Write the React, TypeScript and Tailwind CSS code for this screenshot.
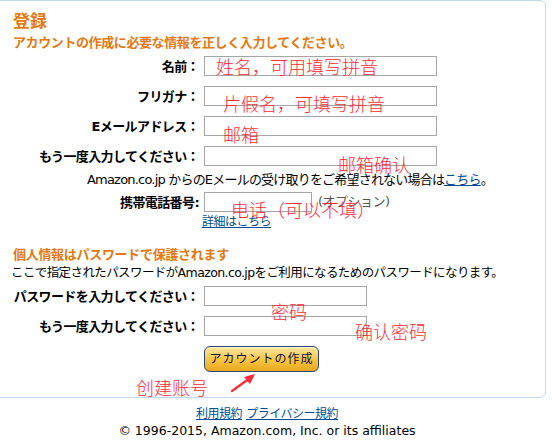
import React from "react";

const jp = { fontFamily: '"DejaVu Sans", "Noto Sans CJK JP", sans-serif' };

function Label({ children }: { children: React.ReactNode }) {
  return (
    <div className="text-right font-bold text-[13px] leading-[19px] tracking-[-0.6px] text-black whitespace-nowrap">
      {children}
    </div>
  );
}

function Field({ w }: { w: string }) {
  return <div className={`h-[20px] border border-[#a6a6a6] bg-white ${w}`} />;
}

function Note({ className, children }: { className: string; children: React.ReactNode }) {
  return (
    <div
      className={`absolute text-[#ff2a36] text-[18px] leading-[18px] whitespace-nowrap ${className}`}
      style={{ fontFamily: '"Noto Sans CJK SC", sans-serif', fontWeight: 300 }}
    >
      {children}
    </div>
  );
}

export default function App() {
  return (
    <div className="w-[560px] h-[441px] bg-white overflow-hidden relative" style={jp}>
      <div className="relative w-[548px] h-[398px] -ml-[2px] border border-[#c2d9ef] rounded-r-[6px] pl-[14px] pt-[10px]">
        <h1 className="text-[17px] font-bold leading-[20px] text-[#e47911]">登録</h1>
        <p className="mt-[4px] text-[13px] font-bold leading-[16px] tracking-[-0.4px] text-[#e47911]">
          アカウントの作成に必要な情報を正しく入力してください。
        </p>

        <div className="mt-[5px] grid grid-cols-[186px_auto] gap-x-[5px] gap-y-[10px] items-center">
          <Label>名前：</Label>
          <Field w="w-[233px]" />
          <Label>フリガナ：</Label>
          <Field w="w-[233px]" />
          <Label>Eメールアドレス：</Label>
          <Field w="w-[233px]" />
          <Label>もう一度入力してください：</Label>
          <Field w="w-[233px]" />
        </div>

        <p className="mt-[5px] pl-[74px] text-[13px] leading-[18px] tracking-[-0.8px] text-black whitespace-nowrap">
          Amazon.co.jp からのEメールの受け取りをご希望されない場合は
          <span className="text-[#004b91] underline">こちら</span>。
        </p>

        <div className="mt-[3px] grid grid-cols-[186px_auto] gap-x-[5px] items-center">
          <Label>携帯電話番号:</Label>
          <div className="flex items-center gap-[6px]">
            <Field w="w-[108px]" />
            <span className="text-[13px] text-[#555] tracking-[-0.5px]">(オプション)</span>
          </div>
        </div>
        <div className="pl-[189px] mt-[2px] text-[12px] leading-[16px] tracking-[-0.5px]">
          <span className="text-[#004b91] underline">詳細はこちら</span>
        </div>

        <h2 className="mt-[17px] text-[13px] font-bold leading-[16px] tracking-[-0.3px] text-[#e47911]">
          個人情報はパスワードで保護されます
        </h2>
        <p className="-ml-[2px] mt-[2px] text-[12.5px] leading-[16px] tracking-[-0.6px] text-black whitespace-nowrap">
          ここで指定されたパスワードがAmazon.co.jpをご利用になるためのパスワードになります。
        </p>

        <div className="mt-[5px] grid grid-cols-[186px_auto] gap-x-[5px] gap-y-[10px] items-center">
          <Label>パスワードを入力してください：</Label>
          <Field w="w-[163px]" />
          <Label>もう一度入力してください：</Label>
          <Field w="w-[163px]" />
        </div>

        <div className="mt-[10px] pl-[191px]">
          <button className="w-[115px] h-[26px] rounded-[6px] border border-[#29467a] bg-gradient-to-b from-[#fde7a0] via-[#f7c744] to-[#eaa81c] text-[12px] tracking-[1px] text-[#101040] leading-[24px] shadow-[inset_0_1px_0_#fff5d0]">
            アカウントの作成
          </button>
        </div>

        <Note className="left-[217px] top-[56px]">姓名，可用填写拼音</Note>
        <Note className="left-[224px] top-[93px]">片假名，可填写拼音</Note>
        <Note className="left-[224px] top-[124px]">邮箱</Note>
        <Note className="left-[339px] top-[154px]">邮箱确认</Note>
        <Note className="left-[232px] top-[199px]">电话（可以不填）</Note>
        <Note className="left-[272px] top-[301px]">密码</Note>
        <Note className="left-[356px] top-[321px]">确认密码</Note>
        <Note className="left-[137px] top-[377px]">创建账号</Note>

        <svg className="absolute left-[231px] top-[369px]" width="28" height="24" viewBox="0 0 28 24">
          <line x1="2" y1="21" x2="20" y2="8" stroke="#ff2a36" strokeWidth="2.2" strokeLinecap="round" />
          <polygon points="25,4 14,7 20,14" fill="#ff2a36" />
        </svg>
      </div>

      <div className="mt-[9px] flex flex-col items-center leading-[15px]">
        <div className="flex gap-[4px] text-[12px] tracking-[-0.5px] ml-[-26px]">
          <span className="text-[#004b91] underline">利用規約</span>
          <span className="text-[#004b91] underline">プライバシー規約</span>
        </div>
        <div className="mt-[1px] text-[12.5px] text-black ml-[-26px]">© 1996-2015, Amazon.com, Inc. or its affiliates</div>
      </div>
    </div>
  );
}
